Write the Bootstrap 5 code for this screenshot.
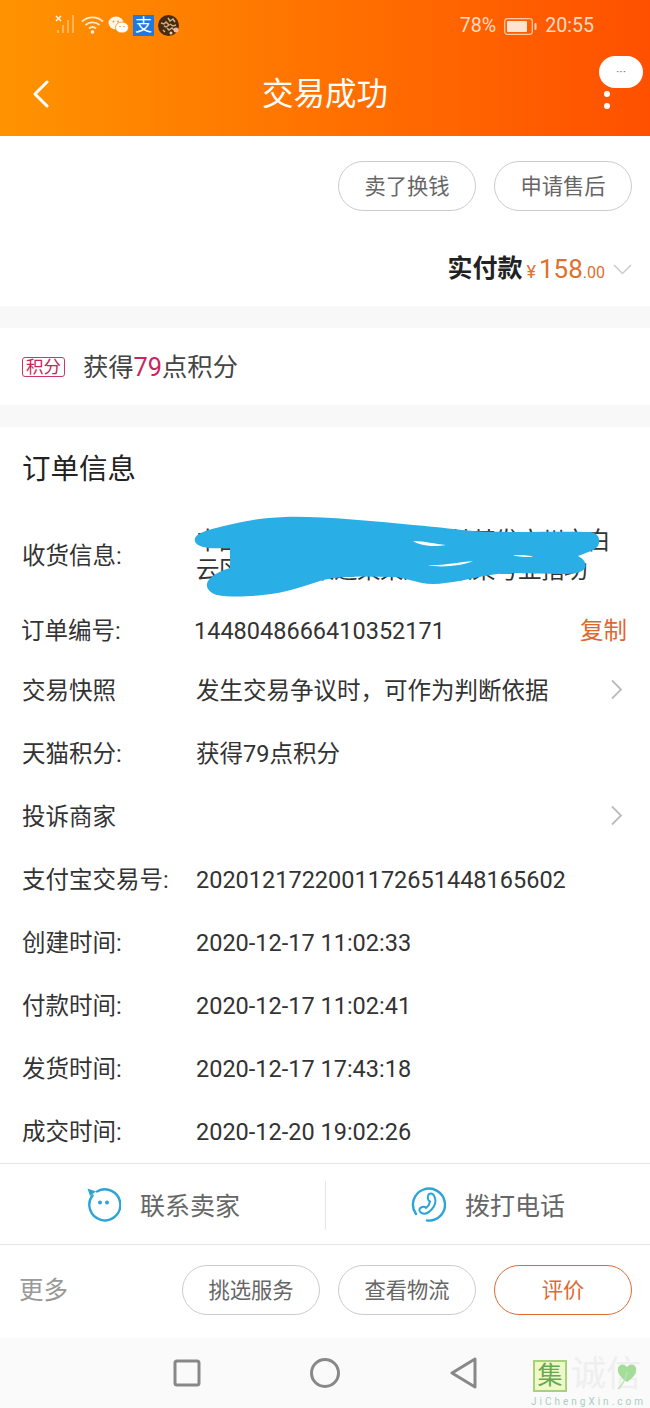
<!DOCTYPE html>
<html lang="zh">
<head>
<meta charset="utf-8">
<title>交易成功</title>
<link href="https://cdn.jsdelivr.net/npm/bootstrap@5.3.0/dist/css/bootstrap.min.css" rel="stylesheet">
<style>
html,body{margin:0;background:#fff}
body{width:650px;height:1408px;overflow:hidden;position:relative;font-family:Roboto,"Noto Sans CJK SC",sans-serif;color:#333;font-size:23.5px;line-height:1.25}
.hdr{height:136px;background:linear-gradient(90deg,#ff9300,#ff5000);color:#fff;position:relative}
.stat{height:50px;padding-left:55px;padding-right:56px;padding-top:3px;color:rgba(255,255,255,.78);font-size:19.6px}
.stat-left{gap:4px;margin-top:-3px}
.alip{width:21px;height:21px;background:#1f78e0;color:#fff;font-size:17px;line-height:21px;text-align:center;display:block}
.hdr-title{height:86px;font-size:31.5px;padding-top:3px}
.back{position:absolute;left:32px;top:80px}
.bubble{position:absolute;left:599px;top:56px;width:44px;height:32px;border-radius:16px;background:#fff;color:#777;font-size:13px;line-height:32px;text-align:center}
.vdot{position:absolute;left:604px;width:6px;height:6px;border-radius:50%;background:#fff}
.vdot-a{top:91px}
.vdot-b{top:103px}
.pay{height:170px;padding:25px 18px 0 0}
.pill{width:138px;height:50px;border:1px solid #ccc;border-radius:25px;background:#fff;color:#666;font-size:21.3px;line-height:1;padding:2px 0 0;display:flex;align-items:center;justify-content:center}
.pill-hot{border-color:#dd6a2f;color:#dd6a2f}
.pill-pair{gap:18px}
.pay-sum{margin-top:40px;height:36px}
.pay-lbl{font-size:25px;font-weight:700;color:#222}
.pay-amt{color:#e0702e;font-size:26px;margin-left:4px}
.pay-yen{font-size:18px;margin-right:3px}
.pay-sm{font-size:16px}
.gapline{height:22px;background:#f8f8f8}
.points{height:77px;padding-left:22px;padding-top:3px}
.pt-tag{width:43px;height:20px;border:1px solid #c73a66;border-radius:3px;color:#c4265a;font-size:17.5px;line-height:18px;text-align:center;margin-right:18px;margin-top:-3px}
.pt-txt{font-size:25.3px;color:#444}
.pt-num{color:#c9265c}
.sec-title{height:81px;padding-left:22px;padding-top:5px;font-size:28.5px;color:#222}
.irow{height:63px;padding:4px 28px 0 22px}
.irow-addr{height:93px}
.irow-order{height:57px}
.ilab{width:174px;flex:none}
.addr{line-height:29px;width:420px;flex:none;white-space:nowrap;margin-top:-2px;letter-spacing:-.5px}
.nudge{margin-left:-1px}
.copy{color:#e0672a;margin-left:auto;margin-right:-5px}
.rchev{margin-left:auto;margin-right:-1px;margin-top:-4px}
.scrib{position:absolute;left:0;top:0;pointer-events:none}
.acts{margin-top:1px;height:82px;border-top:1px solid #e6e6e6;border-bottom:1px solid #e6e6e6;background:#fff;font-size:25px;color:#666}
.act{width:325px;height:100%;gap:19px}
.act-t{padding-top:5px}
.act+.act{position:relative}
.act+.act::before{content:"";position:absolute;left:0;top:17px;bottom:14px;width:1px;background:#e6e6e6}
.more{height:93px;padding:20px 18px 23px 19px;gap:18px}
.more-l{font-size:24.5px;color:#999;margin-right:auto;margin-top:2px}
.syn{height:70px;background:#fafafa;position:relative}
.nav-ic{gap:108.5px}
.wm{position:absolute;left:533px;top:22px;height:48px;width:117px}
.wm-box{position:absolute;left:0;top:0;width:34px;height:32px;background:#eef8c8;border:2px solid #a8d27a;color:#6aa84f;font-size:25px;line-height:27px;text-align:center}
.wm-cn{position:absolute;left:38px;top:-4px;font-size:35px;line-height:38px;color:#efefef;white-space:nowrap}
.wm-heart{position:absolute;left:82px;top:0}
.wm-en{position:absolute;left:-2px;top:36px;font-size:10px;letter-spacing:3px;line-height:12px;color:#a9cfc0;white-space:nowrap}
</style>
</head>
<body>
<header class="hdr">
  <div class="stat d-flex align-items-center justify-content-between">
    <div class="stat-left d-flex align-items-center">
      <svg width="22" height="22" viewBox="0 0 22 22" aria-hidden="true"><g stroke="rgba(255,255,255,.85)" stroke-width="1.6"><path d="M1 2l5 5M6 2L1 7"/></g><g stroke="rgba(255,255,255,.45)" stroke-width="1.6"><path d="M3 19v-3M8 19V11M13 19V6M18 19V1"/></g></svg>
      <svg width="23" height="20" viewBox="0 0 23 20" fill="none" stroke="rgba(255,255,255,.82)" stroke-width="1.8" aria-hidden="true"><path d="M1 6.5c6-5.5 15-5.5 21 0M4.5 10c4-3.5 10-3.5 14 0M8 13.5c2-1.700 5-1.700 7 0"/><circle cx="11.500" cy="17" r="1.800" fill="rgba(255,255,255,.9)" stroke="none"/></svg>
      <svg width="21" height="18" viewBox="0 0 21 18" aria-hidden="true"><ellipse cx="8" cy="7" rx="7.500" ry="6.500" fill="rgba(255,255,255,.92)"/><ellipse cx="14" cy="11.500" rx="6.500" ry="5.500" fill="#fff" stroke="#ff8a00" stroke-width=".8"/><circle cx="5.500" cy="5.500" r="1" fill="#ff9a20"/><circle cx="10" cy="5.500" r="1" fill="#ff9a20"/><circle cx="12" cy="10.500" r=".8" fill="#ff9a20"/><circle cx="16" cy="10.500" r=".8" fill="#ff9a20"/></svg>
      <span class="alip">支</span>
      <svg width="21" height="21" viewBox="0 0 21 21" aria-hidden="true"><circle cx="10.500" cy="10.500" r="10.500" fill="#4a2a14"/><path d="M3 8l3 1 2-2 3 3-3 2-2-1M10 3l2 3 3-2 2 3M9 13l2 2 3-2 2 2M5 15l2 2M12 9l3 2 3-1" stroke="#cdb27e" stroke-width="1.500" fill="none"/><circle cx="18" cy="15" r="2.500" fill="#f0b8a0"/><circle cx="13" cy="18" r="1.500" fill="#e8d2a8"/></svg>
    </div>
    <div class="d-flex align-items-center gap-2">
      <span>78%</span>
      <svg width="33" height="17" viewBox="0 0 33 17" aria-hidden="true"><rect x=".7" y=".7" width="27.600" height="15.600" rx="2.500" fill="none" stroke="rgba(255,255,255,.65)" stroke-width="1.300"/><rect x="3" y="3" width="20" height="11" rx="1" fill="#fde3d2"/><rect x="30.500" y="5" width="2" height="7" rx="1" fill="rgba(255,255,255,.7)"/></svg>
      <span>20:55</span>
    </div>
  </div>
  <div class="hdr-title d-flex align-items-center justify-content-center">交易成功</div>
  <svg class="back" width="18" height="28" viewBox="0 0 18 28" fill="none" stroke="#fff" stroke-width="3" stroke-linecap="round" stroke-linejoin="round" aria-hidden="true"><path d="M15 2L3 14l12 12"/></svg>
  <div class="bubble">···</div>
  <span class="vdot vdot-a"></span>
  <span class="vdot vdot-b"></span>
</header>

<section class="pay">
  <div class="pill-pair d-flex justify-content-end">
    <button type="button" class="btn pill">卖了换钱</button>
    <button type="button" class="btn pill">申请售后</button>
  </div>
  <div class="pay-sum d-flex align-items-center justify-content-end">
    <span class="pay-lbl">实付款</span>
    <span class="pay-amt"><span class="pay-yen">¥</span>158<span class="pay-sm">.00</span></span>
    <svg class="ms-2" width="19" height="11" viewBox="0 0 19 11" fill="none" stroke="#ccc" stroke-width="1.500" aria-hidden="true"><path d="M1 1l8.500 8.500L18 1"/></svg>
  </div>
</section>

<div class="gapline"></div>
<section class="points d-flex align-items-center">
  <span class="pt-tag">积分</span>
  <span class="pt-txt">获得<span class="pt-num">79</span>点积分</span>
</section>
<div class="gapline"></div>

<main>
  <h2 class="sec-title d-flex align-items-center m-0 fw-normal">订单信息</h2>
  <div class="irow irow-addr d-flex align-items-center"><span class="ilab">收货信息:</span><span class="addr">中国某某某某某某某某某某某发广州市白<br>云区某某某某道某某某某某某号亚指功</span></div>
  <div class="irow irow-order d-flex align-items-center"><span class="ilab nudge">订单编号:</span><span class="nudge">1448048666410352171</span><span class="copy">复制</span></div>
  <div class="irow d-flex align-items-center"><span class="ilab">交易快照</span><span>发生交易争议时&#65292;可作为判断依据</span><svg class="rchev" width="13" height="21" viewBox="0 0 13 21" fill="none" stroke="#bbb" stroke-width="1.800" aria-hidden="true"><path d="M2 1.500l9 9-9 9"/></svg></div>
  <div class="irow d-flex align-items-center"><span class="ilab">天猫积分:</span><span>获得79点积分</span></div>
  <div class="irow d-flex align-items-center"><span class="ilab">投诉商家</span><svg class="rchev" width="13" height="21" viewBox="0 0 13 21" fill="none" stroke="#bbb" stroke-width="1.800" aria-hidden="true"><path d="M2 1.500l9 9-9 9"/></svg></div>
  <div class="irow d-flex align-items-center"><span class="ilab">支付宝交易号:</span><span>2020121722001172651448165602</span></div>
  <div class="irow d-flex align-items-center"><span class="ilab">创建时间:</span><span>2020-12-17 11:02:33</span></div>
  <div class="irow d-flex align-items-center"><span class="ilab">付款时间:</span><span>2020-12-17 11:02:41</span></div>
  <div class="irow d-flex align-items-center"><span class="ilab">发货时间:</span><span>2020-12-17 17:43:18</span></div>
  <div class="irow d-flex align-items-center"><span class="ilab">成交时间:</span><span>2020-12-20 19:02:26</span></div>
</main>

<svg class="scrib" width="650" height="620" viewBox="0 0 650 620" aria-hidden="true">
  <path fill="#2aaee6" d="M195 538C198 533 205 531 212 529C235 523 255 518 285 517C320 516 370 521 413 525C440 527 460 530 473 531C510 533 560 531 590 532C599 533 601 540 598 546C594 551 585 553 578 556C584 559 587 564 585 568C582 573 575 574 560 574C540 574 515 572 497 574C475 577 450 584 433 584C418 584 405 577 393 577C370 577 345 575 323 580C305 586 285 593 263 595C245 597 228 597 217 595C208 592 205 586 208 581C212 575 222 570 230 568L230 548C220 548 210 549 203 547C196 545 194 542 195 538Z"/>
  <path fill="#fff" d="M413 541C425 541 435 544 446 545C435 547 420 546 413 541ZM428 565C440 566 460 562 473 561C462 566 440 568 428 565ZM513 555C520 555 530 555 533 557C526 557 518 557 513 555Z"/>
</svg>

<section class="acts d-flex">
  <div class="act d-flex align-items-center justify-content-center">
    <svg width="36" height="36" viewBox="0 0 36 36" fill="none" aria-hidden="true"><path d="M7.500 9.500A15.500 15.500 0 1 0 12 5.500" stroke="#2ba4d6" stroke-width="2.400" stroke-linecap="round"/><path d="M2.500 2.500l8.500 3-6 4.500z" fill="#2ba4d6"/><circle cx="15" cy="16.500" r="2" fill="#2ba4d6"/><circle cx="22" cy="16.500" r="2" fill="#2ba4d6"/></svg>
    <span class="act-t">联系卖家</span>
  </div>
  <div class="act d-flex align-items-center justify-content-center">
    <svg width="36" height="36" viewBox="0 0 36 36" fill="none" stroke="#2ba4d6" stroke-width="2.400" stroke-linecap="round" aria-hidden="true"><path d="M6 28A16 16 0 1 1 17 34.500"/><path d="M19 8c3-1.500 5 .5 6 4s.5 7-3 11-7.500 5.500-10.500 4-2.500-4.500-.5-5.500 3.500-1 5 .5c2-1.500 3.500-4 4-6.500-2.500-1-3-5.500-1-7.500z" stroke-width="2"/></svg>
    <span class="act-t">拨打电话</span>
  </div>
</section>

<section class="more d-flex align-items-center">
  <span class="more-l">更多</span>
  <button type="button" class="btn pill">挑选服务</button>
  <button type="button" class="btn pill">查看物流</button>
  <button type="button" class="btn pill pill-hot">评价</button>
</section>

<nav class="syn d-flex align-items-center justify-content-center">
  <div class="nav-ic d-flex align-items-center">
    <svg width="28" height="28" viewBox="0 0 28 28" fill="none" stroke="#888" stroke-width="3" stroke-linejoin="round" aria-hidden="true"><rect x="2" y="2" width="24" height="24" rx="2"/></svg>
    <svg width="32" height="32" viewBox="0 0 32 32" fill="none" stroke="#888" stroke-width="3" aria-hidden="true"><circle cx="16" cy="16" r="13.500"/></svg>
    <svg width="28" height="32" viewBox="0 0 28 32" fill="none" stroke="#888" stroke-width="3" stroke-linejoin="round" aria-hidden="true"><path d="M25 2v28L2 16z"/></svg>
  </div>
  <div class="wm">
    <span class="wm-box">集</span>
    <span class="wm-cn">诚信</span>
    <svg class="wm-heart" width="24" height="30" viewBox="0 0 24 30" aria-hidden="true"><path d="M12 22C5 17 2 13 3 8c1-4 6-5 9-1 3-4 8-3 9 1 1 5-2 9-9 14z" fill="#a6dc9a"/><path d="M3 29C8 24 11 20 12 12" stroke="#b9e2b0" stroke-width="1.500" fill="none"/></svg>
    <span class="wm-en">JiChengXin.com</span>
  </div>
</nav>
<script src="https://cdn.jsdelivr.net/npm/bootstrap@5.3.0/dist/js/bootstrap.bundle.min.js"></script>
</body>
</html>
